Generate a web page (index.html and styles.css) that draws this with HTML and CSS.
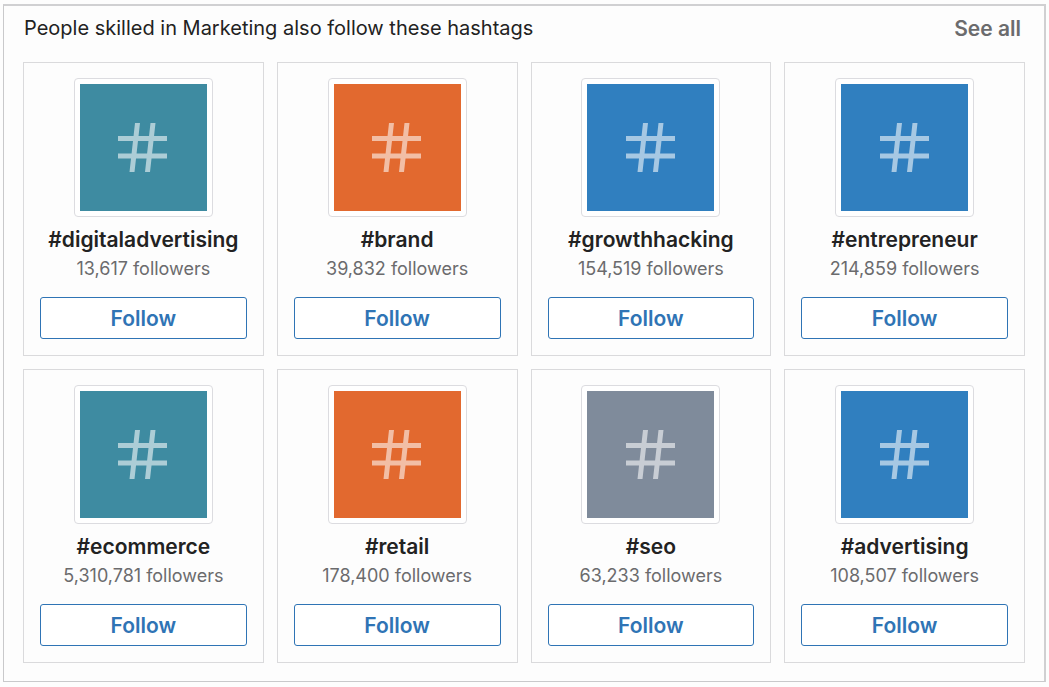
FILE: index.html
```
<!DOCTYPE html>
<html lang="en">
<head>
  <meta charset="UTF-8">
  <meta name="viewport" content="width=device-width, initial-scale=1">
  <title>Hashtags to follow</title>
  <link rel="stylesheet" href="styles.css">
</head>
<body>
  <svg class="sprite" aria-hidden="true">
    <symbol id="hash" viewBox="0 0 50 50">
      <path d="M0 13h49v5H0zM0 30.5h49v5H0zM17 0h5l-5.500 49h-5zM32.500 0h5L32 49h-5z"/>
    </symbol>
  </svg>

  <main class="panel">
    <header class="panel-header">
      <h1>People skilled in Marketing also follow these hashtags</h1>
      <a href="#" class="see-all">See all</a>
    </header>

    <div class="grid">
      <article class="card">
        <div class="thumb"><div class="tile teal"><svg><use href="#hash"/></svg></div></div>
        <h2>#digitaladvertising</h2>
        <p>13,617 followers</p>
        <button type="button">Follow</button>
      </article>
      <article class="card">
        <div class="thumb"><div class="tile orange"><svg><use href="#hash"/></svg></div></div>
        <h2>#brand</h2>
        <p>39,832 followers</p>
        <button type="button">Follow</button>
      </article>
      <article class="card">
        <div class="thumb"><div class="tile blue"><svg><use href="#hash"/></svg></div></div>
        <h2>#growthhacking</h2>
        <p>154,519 followers</p>
        <button type="button">Follow</button>
      </article>
      <article class="card">
        <div class="thumb"><div class="tile blue"><svg><use href="#hash"/></svg></div></div>
        <h2>#entrepreneur</h2>
        <p>214,859 followers</p>
        <button type="button">Follow</button>
      </article>
      <article class="card">
        <div class="thumb"><div class="tile teal"><svg><use href="#hash"/></svg></div></div>
        <h2>#ecommerce</h2>
        <p>5,310,781 followers</p>
        <button type="button">Follow</button>
      </article>
      <article class="card">
        <div class="thumb"><div class="tile orange"><svg><use href="#hash"/></svg></div></div>
        <h2>#retail</h2>
        <p>178,400 followers</p>
        <button type="button">Follow</button>
      </article>
      <article class="card">
        <div class="thumb"><div class="tile gray"><svg><use href="#hash"/></svg></div></div>
        <h2>#seo</h2>
        <p>63,233 followers</p>
        <button type="button">Follow</button>
      </article>
      <article class="card">
        <div class="thumb"><div class="tile blue"><svg><use href="#hash"/></svg></div></div>
        <h2>#advertising</h2>
        <p>108,507 followers</p>
        <button type="button">Follow</button>
      </article>
    </div>
  </main>
</body>
</html>
```
FILE: styles.css
```
* { box-sizing: border-box; }
body {
  font-family: Inter, "Liberation Sans", sans-serif;
  background-color: #fdfdfd;
  color: #222;
  margin: 0;
  padding: 4px 3px;
}
h1, h2, p { margin: 0; }
.sprite { display: none; }
.panel {
  border: 1px solid #c9c9cb;
  border-top: 2px solid #d0d0d2;
  border-right: 2px solid #d0d0d2;
  padding: 8px 19px 18px;
}
.panel-header {
  display: flex;
  justify-content: space-between;
  align-items: center;
  height: 28px;
  margin-bottom: 20px;
  padding: 0 4px 0 1px;
}
.panel-header h1 {
  font-size: 20px;
  font-weight: 400;
}
.see-all {
  font-size: 21px;
  font-weight: 600;
  color: #6b6b6d;
  text-decoration: none;
}
.grid {
  display: grid;
  grid-template-columns: repeat(4, 1fr);
  gap: 13px;
}
.card {
  display: flex;
  flex-direction: column;
  align-items: center;
  border: 1px solid #dadadc;
  padding: 15px 16px 16px;
  text-align: center;
}
.thumb {
  border: 1px solid #dcdce0;
  border-radius: 4px;
  padding: 5px;
  background: #fff;
}
.tile {
  display: flex;
  align-items: center;
  justify-content: center;
  width: 127px;
  height: 127px;
}
.tile svg {
  width: 50px;
  height: 50px;
  fill: #fff;
  opacity: 0.57;
}
.teal { background-color: #3e8ba1; }
.orange { background-color: #e2692f; }
.blue { background-color: #307fbf; }
.gray { background-color: #7f8b9b; }
.card h2 {
  font-size: 21px;
  font-weight: 600;
  line-height: 28px;
  margin-top: 9px;
}
.card p {
  font-size: 18px;
  line-height: 30px;
  color: #6b6b6d;
}
.card button {
  width: 100%;
  height: 42px;
  margin-top: 13px;
  padding: 0;
  border: 1px solid #2f74b5;
  border-radius: 3px;
  background: #fff;
  color: #2f74b5;
  font-family: inherit;
  font-size: 21px;
  font-weight: 600;
  cursor: pointer;
}
.card button:hover { background-color: #eef5fb; }
```
